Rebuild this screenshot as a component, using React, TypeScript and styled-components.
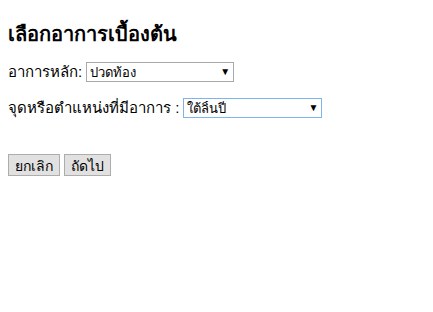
import React, { useState } from 'react';
import styled, { createGlobalStyle } from 'styled-components';

const GlobalStyle = createGlobalStyle`
  body {
    margin: 8px;
    background: #ffffff;
    color: #000000;
    font-family: Tahoma, "Liberation Sans", "Noto Sans", sans-serif;
  }
`;

const Page = styled.div`
  display: flex;
  flex-direction: column;
`;

const Title = styled.h3`
  font-size: 20px;
  font-weight: bold;
  margin: 15px 0 17px;
  line-height: 22px;
`;

const Row = styled.div`
  display: flex;
  align-items: center;
  gap: 4px;
  font-size: 15px;
  margin-bottom: 16px;
  height: 20px;
`;

const SelectBox = styled.div<{ $width: number }>`
  position: relative;
  width: ${(p) => p.$width}px;
  height: 20px;
`;

const Select = styled.select<{ $focused?: boolean }>`
  appearance: none;
  width: 100%;
  height: 100%;
  font-family: Tahoma, "Liberation Sans", "Noto Sans", sans-serif;
  font-size: 13px;
  padding: 0 0 0 3px;
  border: 1px solid ${(p) => (p.$focused ? '#7eb4ea' : '#a9a9a9')};
  border-radius: 0;
  background: #ffffff;
  color: #000000;
  outline: none;
`;

const Arrow = styled.span`
  position: absolute;
  right: 4px;
  top: 50%;
  transform: translateY(-50%);
  font-size: 10px;
  line-height: 1;
  color: #000000;
  pointer-events: none;
`;

const Buttons = styled.div`
  display: flex;
  gap: 4px;
  margin-top: 20px;
`;

const Button = styled.button`
  height: 22px;
  padding: 0 6px;
  font-family: Tahoma, "Liberation Sans", "Noto Sans", sans-serif;
  font-size: 14px;
  background: #e1e1e1;
  border: 1px solid #adadad;
  border-radius: 0;
  color: #000000;
`;

const App: React.FC = () => {
  const [symptom, setSymptom] = useState('ปวดท้อง');
  const [spot, setSpot] = useState('ใต้ลิ้นปี่');

  return (
    <Page>
      <GlobalStyle />
      <Title>เลือกอาการเบื้องต้น</Title>
      <Row>
        อาการหลัก:
        <SelectBox $width={148}>
          <Select value={symptom} onChange={(e) => setSymptom(e.target.value)}>
            <option>ปวดท้อง</option>
            <option>ปวดหัว</option>
            <option>ไข้</option>
          </Select>
          <Arrow>▼</Arrow>
        </SelectBox>
      </Row>
      <Row>
        จุดหรือตำแหน่งที่มีอาการ :
        <SelectBox $width={139}>
          <Select $focused value={spot} onChange={(e) => setSpot(e.target.value)}>
            <option>ใต้ลิ้นปี่</option>
            <option>รอบสะดือ</option>
            <option>ท้องน้อย</option>
          </Select>
          <Arrow>▼</Arrow>
        </SelectBox>
      </Row>
      <Buttons>
        <Button>ยกเลิก</Button>
        <Button>ถัดไป</Button>
      </Buttons>
    </Page>
  );
};

export default App;
